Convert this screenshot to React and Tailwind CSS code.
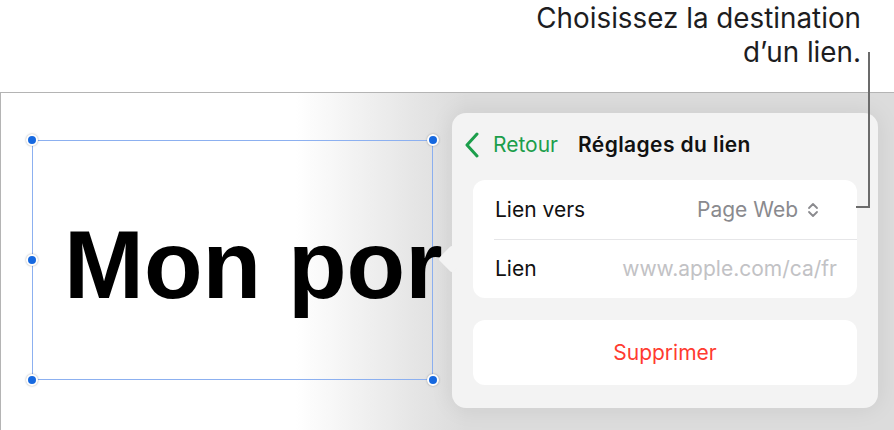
import React from "react";

function Handle({ className }) {
  return (
    <span
      className={
        "absolute w-[12px] h-[12px] rounded-full bg-[#1769e0] border-2 border-white shadow-[0_0_2px_rgba(0,0,0,0.35)] " +
        className
      }
    />
  );
}

export default function App() {
  return (
    <div className="relative w-[894px] h-[430px] bg-white flex flex-col overflow-hidden font-['Inter',sans-serif]">
      {/* Annotation */}
      <div className="h-[92px] pr-[33px] pt-[1px] text-right text-[27.8px] leading-[34px] text-[#1d1d1f]">
        <p>Choisissez la destination</p>
        <p>d’un lien.</p>
      </div>

      {/* Canvas */}
      <div className="relative flex-1 border-t border-l border-[#b4b4b4] overflow-hidden bg-[linear-gradient(to_right,#ffffff_33%,#e4e4e4_47%,#dcdcdc_52%,#dcdcdc)]">
        {/* Selected text box */}
        <div className="relative ml-[31px] mt-[47px] w-[401px] h-[240px] border border-[#8cb0f0]">
          <Handle className="-left-[7px] -top-[7px]" />
          <Handle className="-right-[7px] -top-[7px]" />
          <Handle className="-left-[7px] top-[113px]" />
          <Handle className="-left-[7px] -bottom-[7px]" />
          <Handle className="-right-[7px] -bottom-[7px]" />
          <div className="ml-[31px] mt-[69px] w-[383px] overflow-hidden whitespace-nowrap font-['Liberation_Sans',Arial,sans-serif] font-bold text-[96px] leading-[110px] text-black">
            Mon por
          </div>
        </div>

        {/* Popover */}
        <div className="absolute left-[451px] top-[20px] w-[426px] h-[295px] rounded-[14px] bg-[#f3f3f3] shadow-[0_0_24px_rgba(0,0,0,0.08)] px-[21px] flex flex-col">
          <div className="absolute -left-[10px] top-[136px] w-[20px] h-[20px] rotate-45 rounded-[3px] bg-[#f3f3f3]" />
          <div className="relative h-[67px] flex items-center -ml-[9px] pb-[3px]">
            <svg width="16" height="26" viewBox="0 0 16 26" className="mr-[13px]">
              <path d="M13 2 L3 13 L13 24" fill="none" stroke="#1c9e4b" strokeWidth="3" strokeLinecap="round" strokeLinejoin="round" />
            </svg>
            <span className="text-[21px] text-[#1c9e4b]">Retour</span>
            <span className="ml-[20px] text-[21px] font-semibold tracking-[0.4px] text-[#111]">Réglages du lien</span>
          </div>
          <div className="relative bg-white rounded-[12px] flex flex-col">
            <div className="h-[59px] flex items-center justify-between pl-[22px] pr-[38px] text-[21px]">
              <span className="text-[#111]">Lien vers</span>
              <span className="flex items-center gap-[9px] text-[#8a8a8e]">
                Page Web
                <svg width="12" height="16" viewBox="0 0 12 16">
                  <path d="M2 6 L6 2 L10 6 M2 10 L6 14 L10 10" fill="none" stroke="#8a8a8e" strokeWidth="1.8" strokeLinecap="round" strokeLinejoin="round" />
                </svg>
              </span>
            </div>
            <div className="ml-[21px] h-px bg-[#e6e6e8]" />
            <div className="h-[58px] flex items-center justify-between pl-[22px] pr-[20px] text-[21px]">
              <span className="text-[#111]">Lien</span>
              <span className="text-[#c2c2c5]">www.apple.com/ca/fr</span>
            </div>
          </div>
          <div className="relative mt-[22px] h-[65px] bg-white rounded-[12px] flex items-center justify-center text-[21px] text-[#ff3b30]">
            Supprimer
          </div>
        </div>
      </div>

      {/* Callout line */}
      <svg className="absolute left-0 top-0" width="894" height="430">
        <path d="M869 52 L869 207 L856 207" fill="none" stroke="#6b6b6b" strokeWidth="2" />
      </svg>
    </div>
  );
}
